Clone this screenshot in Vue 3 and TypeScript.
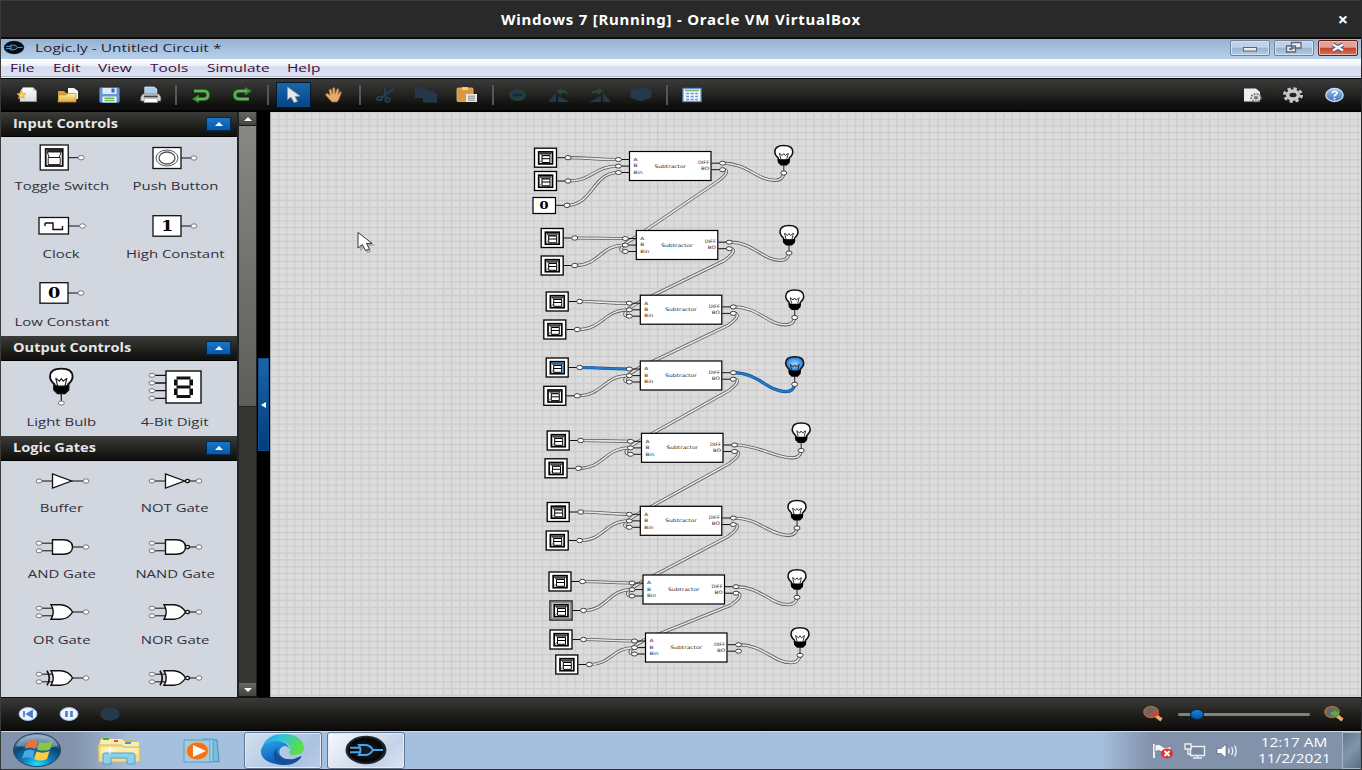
<script setup lang="ts">
interface Item { label: string; icon: string }
interface Group { title: string; kind: string; items: Item[] }
interface Row {
  x: number
  y: number
  a: [number, number]
  b: [number, number]
  bulb: [number, number]
  on?: boolean
  selected?: boolean
}

const menus = [
  { t: 'File', w: 43 }, { t: 'Edit', w: 45 }, { t: 'View', w: 52 },
  { t: 'Tools', w: 57 }, { t: 'Simulate', w: 79.5 }, { t: 'Help', w: 50 },
]

const tools = [
  'new', 'open', 'save', 'print', '|', 'undo', 'redo', '|', 'select', 'hand', '|',
  'cut', 'copy', 'paste', '|', 'wire', 'rotl', 'rotr', 'chip', '|', 'table',
]
const rightTools = ['docgear', 'gear', 'help']

const groups: Group[] = [
  {
    title: 'Input Controls', kind: 'input', items: [
      { label: 'Toggle Switch', icon: 'toggle' }, { label: 'Push Button', icon: 'push' },
      { label: 'Clock', icon: 'clock' }, { label: 'High Constant', icon: 'high' },
      { label: 'Low Constant', icon: 'low' },
    ],
  },
  {
    title: 'Output Controls', kind: 'output', items: [
      { label: 'Light Bulb', icon: 'bulb' }, { label: '4-Bit Digit', icon: 'digit' },
    ],
  },
  {
    title: 'Logic Gates', kind: 'gates', items: [
      { label: 'Buffer', icon: 'buffer' }, { label: 'NOT Gate', icon: 'not' },
      { label: 'AND Gate', icon: 'and' }, { label: 'NAND Gate', icon: 'nand' },
      { label: 'OR Gate', icon: 'or' }, { label: 'NOR Gate', icon: 'nor' },
      { label: '', icon: 'xor' }, { label: '', icon: 'xnor' },
    ],
  },
]

const rows: Row[] = [
  { x: 629.5, y: 151.5, a: [534, 147.7], b: [534, 171], bulb: [783.8, 145] },
  { x: 636.3, y: 230.5, a: [540.7, 228], b: [540.7, 255.5], bulb: [789, 225] },
  { x: 640.3, y: 295.2, a: [545.7, 291.5], b: [543.3, 319.5], bulb: [794.7, 289.5] },
  { x: 640.3, y: 361, a: [545.7, 357.5], b: [543.3, 385.8], bulb: [794.7, 356.3], on: true },
  { x: 641.5, y: 433.3, a: [546.7, 430.5], b: [544.5, 458.3], bulb: [801.2, 422.5] },
  { x: 640.3, y: 506.3, a: [546.7, 502], b: [545.7, 530.5], bulb: [797, 500] },
  { x: 643, y: 575, a: [548.5, 571.5], b: [549.5, 600.5], bulb: [797, 569.3], selected: true },
  { x: 645.5, y: 633, a: [549.5, 629.5], b: [555.3, 654.5], bulb: [800, 627.3] },
]

function link(x1: number, y1: number, x2: number, y2: number): string {
  const k = (x2 - x1) * 0.5
  return `M${x1} ${y1}C${x1 + k} ${y1} ${x2 - k} ${y2} ${x2} ${y2}`
}

const wires: { d: string; on: boolean }[] = []
rows.forEach((r, i) => {
  const ix = r.x - 11.3
  wires.push({ d: link(r.a[0] + 34, r.a[1] + 10, ix, r.y + 8), on: !!r.on })
  wires.push({ d: link(r.b[0] + 34, r.b[1] + 10, ix, r.y + 14.6), on: false })
  const sx = r.x + 93
  const sy = r.y + 11.7
  const nx = r.bulb[0]
  const ny = r.bulb[1] + 28
  wires.push({
    d: `M${sx} ${sy}C${sx + 25} ${sy} ${nx - 27} ${ny + 7.3} ${nx - 9} ${ny + 7.3}C${nx - 3} ${ny + 7.3} ${nx - 0.5} ${ny + 4.5} ${nx} ${ny}`,
    on: !!r.on,
  })
  const next = rows[i + 1]
  if (next) {
    const by = r.y + 18
    const ex = next.x - 11.3
    const ey = next.y + 21
    wires.push({
      d: `M${sx} ${by}C${sx + 6} ${by} ${sx + 6} ${by + 4} ${sx - 5} ${by + 12}L${ex + 10} ${ey - 14}C${ex - 6} ${ey - 5} ${ex - 7} ${ey} ${ex} ${ey}`,
      on: false,
    })
  }
})
wires.push({ d: link(567, 205.3, 618.2, 172.5), on: false })
</script>

<template>
  <div class="screen">
    <svg class="defs" width="0" height="0">
      <defs>
        <linearGradient id="gold" x2="0" y2="1"><stop stop-color="#fff0a8" /><stop offset="1" stop-color="#dfa637" /></linearGradient>
        <linearGradient id="glass" x2="0" y2="1"><stop stop-color="#fff" /><stop offset="1" stop-color="#dcdcdc" /></linearGradient>
        <linearGradient id="blue" x2="0" y2="1"><stop stop-color="#9fc6ef" /><stop offset="1" stop-color="#3b72ba" /></linearGradient>
        <radialGradient id="orb" cx=".5" cy=".95" r=".9"><stop stop-color="#22e2ff" /><stop offset=".35" stop-color="#0a80bb" /><stop offset=".7" stop-color="#0d4272" /><stop offset="1" stop-color="#6f94b0" /></radialGradient>
        <linearGradient id="edge1" x2="1" y2=".3"><stop stop-color="#2a9de6" /><stop offset=".5" stop-color="#2fc6d8" /><stop offset="1" stop-color="#5cdd49" /></linearGradient>
        <linearGradient id="edge2" x2=".4" y2="1"><stop stop-color="#28a5eb" /><stop offset="1" stop-color="#0c55b2" /></linearGradient>
        <radialGradient id="logo"><stop stop-color="#1c1f22" /><stop offset=".8" stop-color="#050607" /><stop offset="1" stop-color="#32373b" /></radialGradient>
        <radialGradient id="lit"><stop stop-color="#a9d3fb" /><stop offset=".7" stop-color="#4197ec" /><stop offset="1" stop-color="#187bdc" /></radialGradient>
      </defs>

      <symbol id="t-new" viewBox="-16 -12 32 24"><path d="M-4-7.500H6L9.500-4V6.500H-7V-3Z" fill="url(#glass)" stroke="#aaa" stroke-width=".5" /><path d="M6-7.500V-4H9.500" fill="#ccc" /><path d="M-5.500-4L-4.300-1.300H-1L-3.500.800-2.700 3.500-5.500 2-8.500 3.500-7.600.800-10-1.300H-6.700Z" fill="#ffd45a" stroke="#dfa22c" stroke-width=".8" /></symbol>
      <symbol id="t-open" viewBox="-16 -12 32 24"><path d="M0-7H6L10-4V4H0Z" fill="#f5f5f5" /><path d="M-10-4H-4L-2-2H6V7H-10Z" fill="#d79b36" /><path d="M-9 0H-2L0-1.500H8L8 7H-10Z" fill="url(#gold)" stroke="#c98b25" stroke-width=".7" /></symbol>
      <symbol id="t-save" viewBox="-16 -12 32 24"><rect x="-9.500" y="-7.500" width="20" height="15" rx="1.500" fill="#6a94d6" stroke="#3e6bb4" stroke-width=".7" /><path d="M-6.500-7H7.500V-1H-6.500Z" fill="#dde9f8" /><path d="M2.500-6.500H5.500V-2.500H2.500Z" fill="#3f69aa" /><path d="M-6.500 1.500H7.500V7.500H-6.500Z" fill="#f4fbef" /><path d="M-4.500 3.200H5.500M-4.500 5.500H5.500" stroke="#62b851" stroke-width="1.400" /></symbol>
      <symbol id="t-print" viewBox="-16 -12 32 24"><g transform="translate(.8 0)"><path d="M-6-8H3L6-6V0H-6Z" fill="#a9cdee" stroke="#dcecfa" stroke-width=".8" /><path d="M-8-1H8L10 2V6H-10V2Z" fill="#d4d6d8" stroke="#777" stroke-width=".7" /><path d="M-7 1.500H7" stroke="#444" stroke-width="1.800" /><path d="M-6 3.500H6L7 7.500H-7Z" fill="#fff" stroke="#999" stroke-width=".5" /></g></symbol>
      <symbol id="t-undo" viewBox="-16 -12 32 24"><path d="M-7-4H3Q7-4 7 0T2 4H-4" fill="none" stroke="#2b7127" stroke-width="4" /><path d="M-2-.500V8L-9 4Z" fill="#3d8c37" /><path d="M-7-4H3Q7-4 7 0T2 4H-5" fill="none" stroke="#67b45c" stroke-width="2" /></symbol>
      <symbol id="t-redo" viewBox="-16 -12 32 24"><g transform="translate(.8 0) scale(-1 1)"><path d="M-4-4H3Q8-4 8 0T3 4H-6" fill="none" stroke="#2b7127" stroke-width="4" /><path d="M-2-8V.500L-9-4Z" fill="#3d8c37" /><path d="M-4-4H3Q8-4 8 0T3 4H-6" fill="none" stroke="#67b45c" stroke-width="2" /></g></symbol>
      <symbol id="t-select" viewBox="-16 -12 32 24"><path d="M-5.500-8V4.500L-2 2 1 7.500 4.500 6.500 2 1.500 7 1Z" fill="#e8e8e8" stroke="#909aa6" stroke-width=".8" /></symbol>
      <symbol id="t-hand" viewBox="-16 -12 32 24"><path d="M-3 6L-8.500 0Q-8.500-2-6-1.500L-4 .500-5-5Q-4-7-2.500-5L-1.500-1-1.500-6.500Q0-8.500 1-6.500V-1.500L3-6Q5-7 5-5L4-.500 6-3.500Q8-4 7-1L4.500 5 3 7H-2Z" fill="#e4aa70" stroke="#9b6030" stroke-width=".7" /></symbol>
      <symbol id="t-cut" viewBox="-16 -12 32 24"><path d="M0-8V1M8-6L-4 3M0 1L3 4" stroke="#28435b" stroke-width="1.600" /><ellipse cx="-5.500" cy="3.500" rx="2.600" ry="1.800" fill="none" stroke="#28435b" stroke-width="1.500" /><ellipse cx="2.500" cy="5" rx="2.400" ry="2" fill="none" stroke="#28435b" stroke-width="1.500" /></symbol>
      <symbol id="t-copy" viewBox="-16 -12 32 24"><path d="M-11-8H-2L1-5V3H-11ZM-3-4H6L11-1V7.500H-3Z" fill="#24384a" /></symbol>
      <symbol id="t-paste" viewBox="-16 -12 32 24"><rect x="-10" y="-7" width="16" height="13.500" rx="1" fill="#d99843" stroke="#f1bb69" stroke-width=".8" /><path d="M-5-8H1V-5H-5Z" fill="#f3cf76" /><path d="M-1-1H10V7H-1Z" fill="#e7e7e7" /><path d="M1 1.200H8M1 3.200H8M1 5.200H8" stroke="#888" /></symbol>
      <symbol id="t-wire" viewBox="-16 -12 32 24"><ellipse cx="-.500" rx="7.500" ry="4.800" fill="#20364a" stroke="#224536" stroke-width="2" /><path d="M-5 0H4" stroke="#102539" stroke-width="1.500" /></symbol>
      <symbol id="t-rotl" viewBox="-16 -12 32 24"><path d="M-3-3V7H-11ZM-1 1L11 7H-1Z" fill="#23394b" /><path d="M-3-4L2-7V-5Q8-6 9 0 6-3 2-2V0Z" fill="#284832" /></symbol>
      <symbol id="t-rotr" viewBox="-16 -12 32 24"><g transform="scale(-1 1)"><path d="M-3-3V7H-11ZM-1 1L11 7H-1Z" fill="#23394b" /><path d="M-3-4L2-7V-5Q8-6 9 0 6-3 2-2V0Z" fill="#284832" /></g></symbol>
      <symbol id="t-chip" viewBox="-16 -12 32 24"><path d="M-10.500-5L-6-6.500-3-6.500 0-8 3-6.500 6-6.500 10.500-5V2.500L5 4.500 0 6.500-5 4.500-10.500 2.500Z" fill="#24394b" /></symbol>
      <symbol id="t-table" viewBox="-16 -12 32 24"><rect x="-9" y="-6.500" width="18" height="13" fill="#f4f9ff" stroke="#6190cd" stroke-width="1.300" /><path d="M-7-4.500H7" stroke="#79b665" stroke-width="1.600" /><path d="M-6-1.500H6M-6 1.500H6M-6 4.500H6" stroke="#6c98d0" stroke-width="1.600" stroke-dasharray="3.200 1.400" /></symbol>
      <symbol id="t-gear" viewBox="-16 -12 32 24"><ellipse rx="8.500" ry="6.300" fill="none" stroke="#c9c9c9" stroke-width="3" stroke-dasharray="3.200 2.650" /><ellipse rx="5.300" ry="4" fill="none" stroke="#c9c9c9" stroke-width="3.500" /></symbol>
      <symbol id="t-docgear" viewBox="-16 -12 32 24"><path d="M-8-6.500H4L8-3V6.500H-8Z" fill="#eee" /><ellipse cx="4" cy="2.700" rx="5" ry="3.800" fill="#ddd" stroke="#777" stroke-width="1.800" stroke-dasharray="1.800 1.200" /><ellipse cx="4" cy="2.700" rx="2.200" ry="1.700" fill="#777" /></symbol>
      <symbol id="t-help" viewBox="-16 -12 32 24"><ellipse cx=".500" rx="8.700" ry="6.500" fill="url(#blue)" stroke="#c9ddf5" stroke-width="1.300" /><path d="M-2-2Q0-5 3-2.700 3.500-1 .500.500V1.500" fill="none" stroke="#fff" stroke-width="1.600" /><circle cx=".500" cy="3.700" r="1" fill="#fff" /></symbol>

      <symbol id="sw" viewBox="0 0 23 20" overflow="visible">
        <rect x=".5" y=".5" width="22" height="19" fill="#fff" stroke="#000" stroke-width="1.300" />
        <rect x="4.700" y="4.200" width="13.800" height="12" fill="#fff" stroke="#000" stroke-width="1.700" />
        <path d="M6 5.700H17L15.500 7.800H8Z" fill="#888" stroke="#000" stroke-width=".8" />
        <path d="M8 8H16V14.800H8ZM8 11H16" fill="#fff" stroke="#000" />
        <path d="M5.500 14.800L8 12" stroke="#555" stroke-width=".8" />
      </symbol>
      <symbol id="lamp" viewBox="-10 0 20 28" overflow="visible">
        <path d="M0 20V28" stroke="#222" />
        <path class="bulb-glass" d="M-9 7Q-9 .500 0 .500T9 7Q9 10 5.500 13V15H-5.500V13Q-9 10-9 7Z" stroke="#111" stroke-width="1.500" />
        <path d="M-4.500 8L-3 14M4.500 8L3 14M-4 8.500L-1.500 10.500 0 8.500 1.500 10.500 4 8.500" fill="none" stroke="#222" stroke-width=".9" />
        <path d="M-6 13.500Q0 16 6 13.500V17.500L3 20.500H-3L-6 17.500Z" fill="#000" />
      </symbol>
      <symbol id="gatelogo" viewBox="-22 -16 44 32">
        <ellipse rx="20.500" ry="14.300" fill="url(#logo)" />
        <path d="M-7-5H-1Q4-5 7 0 4 5-1 5H-7Q-4 0-7-5ZM7 0H17M-16-2.300H-6M-16 2.300H-6" fill="none" stroke="#48a3ef" stroke-width="2" />
      </symbol>
    </svg>

    <header class="host">
      <span class="host-title">Windows 7 [Running] - Oracle VM VirtualBox</span>
      <span class="host-close">×</span>
    </header>

    <div class="titlebar">
      <svg class="app-logo" viewBox="-22 -16 44 32" preserveAspectRatio="none"><use href="#gatelogo" x="-22" y="-16" width="44" height="32" /></svg>
      <span class="app-title wide">Logic.ly - Untitled Circuit *</span>
      <div class="win-buttons">
        <span class="win"><svg width="40" height="15"><rect x="13.500" y="7.500" width="13" height="3.500" fill="#eee" stroke="#59657a" /></svg></span>
        <span class="win"><svg width="40" height="15"><path d="M17.500 2.500H27V8H17.500ZM12.500 6H21.500V12H12.500Z" fill="#eee" stroke="#59657a" stroke-width="1.300" /><rect x="15.500" y="8.300" width="3" height="1.500" fill="#6d86a5" stroke="#59657a" stroke-width=".6" /></svg></span>
        <span class="win close"><svg width="40" height="15"><path d="M15 4.500L25 10.500M25 4.500L15 10.500" stroke="#515968" stroke-width="4.600" /><path d="M15 4.500L25 10.500M25 4.500L15 10.500" stroke="#f4f4f4" stroke-width="2.600" /></svg></span>
      </div>
    </div>

    <nav class="menu">
      <span v-for="m in menus" :key="m.t" class="menu-item" :style="{ width: m.w + 'px' }"><b class="wide">{{ m.t }}</b></span>
    </nav>

    <div class="toolbar">
      <template v-for="(t, i) in tools" :key="i">
        <i v-if="t === '|'" class="sep" />
        <span v-else class="tool" :class="{ active: t === 'select' }"><svg width="32" height="24"><use :href="'#t-' + t" width="32" height="24" /></svg></span>
      </template>
      <span class="spacer" />
      <span v-for="t in rightTools" :key="t" class="tool"><svg width="32" height="24"><use :href="'#t-' + t" width="32" height="24" /></svg></span>
    </div>

    <main class="work">
      <aside class="side">
        <section v-for="g in groups" :key="g.title" :class="g.kind">
          <h2 class="group-head"><span class="wide">{{ g.title }}</span><i class="collapse"><svg width="8" height="4"><path d="M0 4L4 0 8 4Z" fill="#fff" /></svg></i></h2>
          <div class="items">
            <div v-for="it in g.items" :key="it.icon" class="item">
              <svg class="part" viewBox="-32 -21 64 42" width="64" height="42" fill="#fff" stroke="#111">
                <g v-if="it.icon === 'toggle'" transform="translate(-.8 0)">
                  <path d="M7-.3H17" /><rect x="-21" y="-13" width="28" height="25" stroke-width="1.300" />
                  <rect x="-15.500" y="-9" width="17" height="17" stroke-width="1.800" />
                  <path d="M-14-6H0L-2-.5H-12ZM-13-.5H-1V6.500H-13Z" stroke-width=".9" /><path d="M-14-7H1" stroke-width="1.800" />
                  <ellipse class="pin" cx="20" cy="-.3" rx="3" ry="2.200" />
                </g>
                <g v-else-if="it.icon === 'push'">
                  <path d="M6 0H17" /><rect x="-22" y="-10.500" width="28" height="21" stroke-width="1.300" />
                  <ellipse cx="-8" rx="11" ry="8" stroke="#555" /><ellipse cx="-8" rx="8" ry="6" stroke="#555" stroke-width="1.300" />
                  <ellipse class="pin" cx="19" rx="3" ry="2.200" />
                </g>
                <g v-else-if="it.icon === 'clock'">
                  <path d="M7 0H18" /><rect x="-23" y="-8.500" width="29.500" height="16.500" stroke-width="1.300" />
                  <path d="M-17-3H-9V3.500H.5V0M-17-3V0" fill="none" stroke-width="1.400" />
                  <ellipse class="pin" cx="20.500" cy="0" rx="3" ry="2.200" />
                </g>
                <g v-else-if="it.icon === 'high' || it.icon === 'low'">
                  <path d="M6 0H16" /><rect x="-22" y="-10.300" width="28" height="20.500" stroke-width="1.300" />
                  <text class="digit" x="0" y="5" transform="translate(-7.800 0) scale(1.180 1)">{{ it.icon === 'high' ? '1' : '0' }}</text>
                  <ellipse class="pin" cx="19" rx="3" ry="2.200" />
                </g>
                <g v-else-if="it.icon === 'bulb'" transform="translate(-.7 0)">
                  <use href="#lamp" x="-13" y="-19" width="26" height="35" />
                  <ellipse class="pin" cx="0" cy="16" rx="3" ry="2" />
                </g>
                <g v-else-if="it.icon === 'digit'">
                  <path d="M-20-11.700H-9M-20-4H-9M-20 3.700H-9M-20 11.300H-9" stroke-width="1.300" />
                  <rect x="-9" y="-16" width="35" height="32" stroke-width="1.400" />
                  <path d="M1.500-9H15.500M1.500 0H15.500M1.500 9.500H15.500" stroke-width="3" /><path d="M.800-7.500V-1.500M16.200-7.500V-1.500M.800 1.500V8M16.200 1.500V8" stroke-width="3.600" />
                  <ellipse v-for="y in [-11.7, -4, 3.7, 11.3]" :key="y" class="pin" cx="-23" :cy="y" rx="3" ry="2" />
                </g>
                <g v-else>
                  <path v-if="it.icon === 'buffer' || it.icon === 'not'" d="M-20 0H-10M8 0H21" />
                  <path v-else d="M-20-3.800H-8M-20 3.800H-8M10 0H21" />
                  <path v-if="it.icon === 'buffer' || it.icon === 'not'" d="M-9.500-7V7L9.500 0Z" stroke-width="1.300" />
                  <path v-else-if="it.icon === 'and' || it.icon === 'nand'" d="M-9.500-7.300H1Q10.500-7 10.500 0T1 7.300H-9.500Z" stroke-width="1.400" />
                  <path v-else d="M-11-7.300H-1Q7-6.500 10.500 0 7 6.500-1 7.300H-11Q-6.500 0-11-7.300Z" stroke-width="1.400" />
                  <path v-if="it.icon === 'xor' || it.icon === 'xnor'" d="M-15-7.300Q-10.500 0-15 7.300" fill="none" stroke-width="1.700" />
                  <ellipse v-if="['not', 'nand', 'nor', 'xnor'].includes(it.icon)" cx="12.500" rx="2" ry="1.600" stroke-width="1.300" />
                  <template v-if="it.icon === 'buffer' || it.icon === 'not'"><ellipse class="pin" cx="-23" rx="2.900" ry="2" /></template>
                  <template v-else><ellipse class="pin" cx="-23" cy="-3.800" rx="2.900" ry="2" /><ellipse class="pin" cx="-23" cy="3.800" rx="2.900" ry="2" /></template>
                  <ellipse class="pin" cx="24" rx="2.900" ry="2.200" />
                </g>
              </svg>
              <span v-if="it.label" class="label wide">{{ it.label }}</span>
            </div>
          </div>
        </section>
      </aside>

      <div class="scroll">
        <span class="arrow"><svg width="8" height="4"><path d="M0 4L4 0 8 4Z" fill="#fff" /></svg></span>
        <span class="thumb" />
        <span class="track" />
        <span class="arrow"><svg width="8" height="4"><path d="M0 0L4 4 8 0Z" fill="#fff" /></svg></span>
      </div>
      <div class="gutter"><span class="handle"><svg width="5" height="6"><path d="M5 0V6L0 3Z" fill="#fff" /></svg></span></div>

      <svg class="canvas" viewBox="270 112 1091 585" width="1091" height="585">
        <defs>
          <pattern id="grid" x="278" y="118.500" width="8.240" height="6.780" patternUnits="userSpaceOnUse">
            <rect width="8.240" height="6.780" fill="#dcdcdc" /><path d="M.5 0V6.780M0 .500H8.240" stroke="#cbcbcb" stroke-width="1.200" />
          </pattern>
        </defs>
        <rect x="270" y="112" width="1091" height="585" fill="url(#grid)" />
        <path d="M270.500 112V697" stroke="#aaa" />
        <g v-for="(w, i) in wires" :key="i" fill="none">
          <path :d="w.d" :stroke="w.on ? '#0f4f8d' : '#5a5a5a'" stroke-width="3.200" />
          <path :d="w.d" :stroke="w.on ? '#1f7bd0' : '#e4e4e4'" :stroke-width="w.on ? 2 : 1.6" />
        </g>
        <g v-for="(r, i) in rows" :key="'r' + i">
          <g v-for="(p, k) in [r.a, r.b]" :key="k">
            <path :d="`M${p[0] + 23} ${p[1] + 10}h8`" stroke="#111" />
            <use href="#sw" :x="p[0]" :y="p[1]" width="23" height="20" />
            <rect v-if="r.selected && k === 1" :x="p[0] + 2" :y="p[1] + 2" width="19" height="16" fill="none" stroke="#8c8c8c" stroke-width="1.800" />
            <path v-if="r.on && k === 0" :d="`M${p[0] + 6} ${p[1] + 5.5}h11.500v10`" fill="none" stroke="#1c6fc0" stroke-width="1.600" />
            <ellipse class="node" :cx="p[0] + 34" :cy="p[1] + 10" rx="3" ry="2.200" />
          </g>
          <path :d="`M${r.x - 9} ${r.y + 8}h9m-9 6.600h9m-9 6.400h9M${r.x + 82} ${r.y + 11.7}h9m-9 6.500h9`" stroke="#111" />
          <rect :x="r.x" :y="r.y" width="81.500" height="29" fill="#fff" stroke="#000" stroke-width="1.200" />
          <text class="tiny" :x="r.x + 4" :y="r.y + 9.300" textLength="4" lengthAdjust="spacingAndGlyphs">A</text>
          <text class="tiny" :x="r.x + 4" :y="r.y + 15.800" textLength="4" lengthAdjust="spacingAndGlyphs">B</text>
          <text class="tiny" :x="r.x + 4" :y="r.y + 22.200" textLength="9" lengthAdjust="spacingAndGlyphs">Bin</text>
          <text class="tiny" :x="r.x + 25" :y="r.y + 16" textLength="31.500" lengthAdjust="spacingAndGlyphs">Subtractor</text>
          <text class="tiny" :x="r.x + 68.500" :y="r.y + 12.800" textLength="11" lengthAdjust="spacingAndGlyphs">DIFF</text>
          <text class="tiny" :x="r.x + 71.500" :y="r.y + 18.700" textLength="8" lengthAdjust="spacingAndGlyphs">BO</text>
          <ellipse v-for="d in [8, 14.6, 21]" :key="d" class="node" :cx="r.x - 11" :cy="r.y + d" rx="3" ry="2" />
          <ellipse v-for="d in [11.7, 18.2]" :key="d" class="node" :cx="r.x + 93" :cy="r.y + d" rx="3" ry="2" />
          <use href="#lamp" :class="{ lit: r.on }" :x="r.bulb[0] - 10" :y="r.bulb[1]" width="20" height="28" />
          <ellipse class="node" :cx="r.bulb[0]" :cy="r.bulb[1] + 28" rx="3" ry="2.100" />
        </g>
        <path d="M556 205.300H565" stroke="#111" />
        <rect x="533" y="197.500" width="22.500" height="16" fill="#fff" stroke="#000" stroke-width="1.200" />
        <text class="zero" x="539.500" y="209.300" textLength="9" lengthAdjust="spacingAndGlyphs">0</text>
        <ellipse class="node" cx="567" cy="205.300" rx="3" ry="2.200" />
        <path d="M360 235V251.500L364 248 367.500 253.500 371.500 251.500 368.500 246.500 375.500 245.500Z" fill="#777" opacity=".45" />
        <path d="M358 232.500V248L362.300 244.500 365.500 250.500 369.500 249 366.500 243.500 372 243.300Z" fill="#fff" stroke="#222" stroke-width=".9" />
      </svg>
    </main>

    <div class="controls">
      <span class="sim"><svg width="20" height="16"><ellipse cx="10" cy="8" rx="9" ry="6.500" fill="#eef4fd" stroke="#9ab9e4" /><path d="M6 5V11M14 5V11L9 8Z" fill="#4b7fc9" stroke="#4b7fc9" stroke-width="1.800" /></svg></span>
      <span class="sim"><svg width="20" height="16"><ellipse cx="10" cy="8" rx="9" ry="6.500" fill="#eef4fd" stroke="#9ab9e4" /><path d="M7.500 5V11M12.500 5V11" stroke="#4b7fc9" stroke-width="2.600" /></svg></span>
      <span class="sim"><svg width="20" height="16"><ellipse cx="10" cy="8" rx="9.800" ry="6.800" fill="#25394a" /></svg></span>
      <span class="spacer" />
      <svg width="22" height="18"><path d="M13 10L19.500 15" stroke="#eda967" stroke-width="3.500" /><ellipse cx="9" cy="7" rx="7" ry="5.500" fill="#66696c" stroke="#a56a38" stroke-width="1.700" /><path d="M7.500 9H17" stroke="#ed3434" stroke-width="3" /></svg>
      <span class="slider"><i class="knob" /></span>
      <svg width="22" height="18"><path d="M13 10L19.500 15" stroke="#eda967" stroke-width="3.500" /><ellipse cx="9" cy="7" rx="7" ry="5.500" fill="#66696c" stroke="#a56a38" stroke-width="1.700" /><path d="M8 8.500H16M12 5.500V11.500" stroke="#4fae46" stroke-width="3" /></svg>
    </div>

    <footer class="taskbar">
      <svg class="start" width="50" height="36" viewBox="0 0 50 36">
        <ellipse cx="25" cy="18" rx="23.500" ry="16.500" fill="url(#orb)" stroke="#24455f" />
        <path d="M4 14Q9 3 25 3T46 14Q36 17 25 16T4 14Z" fill="#fff" opacity=".33" />
        <path d="M15.500 9.500Q20 6 25.500 9.500L23 17Q18 14 13 17Z" fill="#ef7136" /><path d="M27.500 10Q33 12.500 41 9L38 17.500Q31 20 25 17.500Z" fill="#8bc642" />
        <path d="M12.500 19Q18 16 22.500 19L20.500 26.500Q15 24 10 26.500Z" fill="#48a8e5" /><path d="M24.500 19.500Q31 22 37.500 19L35 27Q29 30 22 27Z" fill="#ffcc3d" />
      </svg>
      <svg class="task explorer" width="46" height="32" viewBox="0 0 46 32">
        <path d="M2 7L5 2H13L15 5H35L42 8V26H2Z" fill="#d6b456" /><path d="M4 4H24L29 7H42V12H2Z" fill="#f8ecb3" /><path d="M6 3H12V5H6Z" fill="#21b53c" /><path d="M17 5H21V7H17Z" fill="#e24b3d" /><path d="M28 7H34V9H28Z" fill="#3a9fe2" />
        <path d="M1 10H24L27 12H43V27H2Z" fill="#f1dc8b" stroke="#d0b254" stroke-width=".8" /><path d="M4 12H24L26 13H41V19H4Z" fill="#fbefb0" />
        <path d="M6 29V19Q6 18 8 18H35Q38 18 38 20V29H30V23H14V29Z" fill="#8ed1ec" stroke="#4aa4cc" stroke-width="1" /><path d="M13 11V19M9 15H17" stroke="#fff" stroke-width="1.200" />
      </svg>
      <svg class="task media" width="42" height="28" viewBox="0 0 42 28">
        <path d="M24 3H34L36 25 24 24Z" fill="#7fbcd8" stroke="#3f91bd" /><path d="M20 2H30V25H20Z" fill="#a4d4e9" stroke="#4d9dc3" /><path d="M1 3H27V25H1Z" fill="#9fcde4" stroke="#55a2c6" />
        <ellipse cx="14.500" cy="14" rx="11" ry="9" fill="#f0721c" stroke="#f9b174" /><path d="M10 8V20L23 14Z" fill="#fff" />
      </svg>
      <span class="win-task edge">
        <svg width="46" height="34" viewBox="0 0 46 34">
          <path d="M2 16C4 5 13 1 24 1 36 1 44 7 44 15 44 20 39 22 34 22 30 22 28 20 30 18 31 11 24 8 17 8 10 8 4 12 2 16Z" fill="url(#edge1)" />
          <path d="M1 17C3 10 10 8 17 8 24 8 29 12 29 16Q27 11 22 14C16 18 20 28 33 27 28 33 20 32 16 31 6 29 0 24 1 17Z" fill="url(#edge2)" />
          <path d="M18 14C13 20 20 28 34 26L41 23C43 24 35 33 23 32 14 31 10 20 18 14Z" fill="#124f9b" />
        </svg>
      </span>
      <span class="win-task current"><svg width="44" height="32"><use href="#gatelogo" width="44" height="32" /></svg></span>
      <span class="spacer" />
      <div class="tray">
        <svg width="24" height="20"><path d="M3 3V17" stroke="#eee" stroke-width="2" /><path d="M4 4Q8 2 11 5T20 5V12Q15 14 11 11T4 11Z" fill="#f4f4f4" stroke="#5b6b80" stroke-width=".7" /><ellipse cx="16" cy="12.500" rx="6" ry="5" fill="#df3030" /><path d="M13.500 10L18.500 15M18.500 10L13.500 15" stroke="#fff" stroke-width="1.800" /></svg>
        <svg width="24" height="20"><rect x="7.500" y="5.500" width="14" height="9" fill="#7488a2" stroke="#eee" stroke-width="1.500" /><path d="M10 17H19M14.500 14V17M2 3H8V8H2ZM5 8V13H7" fill="#7a899b" stroke="#eee" stroke-width="1.400" /></svg>
        <svg width="24" height="20"><path d="M2 7.500H6L11 3V17L6 12.500H2Z" fill="#fff" stroke="#52647c" stroke-width=".7" /><path d="M13.500 7.500Q15 10 13.500 12.500M16.500 6Q19 10 16.500 14M19.500 4.500Q23 10 19.500 15.500" fill="none" stroke="#eef2f8" stroke-width="1.300" /></svg>
      </div>
      <div class="clock"><span class="wide">12:17 AM</span><span class="wide">11/2/2021</span></div>
      <span class="peek" />
    </footer>
  </div>
</template>

<style>
body { margin: 0; overflow: hidden; }
</style>

<style scoped>
* { box-sizing: border-box; }
.screen {
  width: 1362px; height: 770px; display: flex; flex-direction: column; overflow: hidden;
  background: #111; border-left: 1px solid #3a3a3a; border-right: 1px solid #2c2c2c; border-bottom: 1px solid #333;
  font-family: "Open Sans", "Noto Sans", sans-serif;
}
.defs { position: absolute; }
svg { display: block; flex: none; }
.wide { display: inline-block; transform: scaleX(1.22); transform-origin: 0 50%; white-space: nowrap; }
.spacer { flex: 1; }

.host { height: 39px; flex: none; position: relative; display: flex; align-items: center; justify-content: center; background: #292929; border-top: 1px solid #3b3b3b; border-bottom: 2px solid #0c0c0c; color: #fff; }
.host-title { font: 700 15px/20px "Noto Sans", sans-serif; letter-spacing: .76px; padding-top: 0; }
.host-close { position: absolute; right: 13px; top: 8px; font: 700 18px/20px "Noto Sans", sans-serif; }

.titlebar { height: 20px; flex: none; display: flex; background: linear-gradient(#96b2d2, #b8d0ea); }
.app-logo { width: 22px; height: 15px; margin: 1px 0 0 2px; }
.app-title { margin-left: 10px; font-size: 11.500px; line-height: 18px; color: #1b2333; transform: scaleX(1.345); }
.win-buttons { margin-left: auto; display: flex; gap: 4px; padding: 1px 3px 0 0; }
.win { width: 40px; height: 16px; border: 1px solid #70829c; border-radius: 2px; background: linear-gradient(#bfd2e9 45%, #99b3d1 50%, #b4cce6); box-shadow: inset 0 0 0 1px #d5e2f1; }
.win svg { margin: -1px; }
.close { border-color: #611f25; background: linear-gradient(#e3a296 45%, #c04329 50%, #d6745c); box-shadow: inset 0 0 0 1px #eebbb1; }

.menu { height: 19px; flex: none; display: flex; padding-left: 9px; background: linear-gradient(#fff, #eff1fa 35%, #d4dbee 45%, #e0e5f4); border-bottom: 1px solid #f4f4f4; box-shadow: inset 0 -1px #aab2c6; }
.menu-item { display: flex; align-items: flex-start; }
.menu-item b { font-weight: 400; font-size: 11.500px; line-height: 18px; color: #3a0c3c; transform: scaleX(1.34); }

.toolbar { height: 34px; flex: none; display: flex; align-items: center; padding: 0 6.500px 0 5.500px; background: linear-gradient(#3b3b39, #232321 50%, #0e0e0c 88%); border-top: 1px solid #000; border-bottom: 2px solid #000; }
.tool { width: 41px; height: 24px; display: flex; align-items: center; justify-content: center; }
.active { width: 33px; margin: 0 4px; background: linear-gradient(#1b66ab, #034585); box-shadow: 0 0 0 1px #06182a; }
.sep { width: 10px; height: 20px; display: flex; justify-content: center; }
.sep::before { content: ""; width: 2px; height: 20px; background: #555; }

.work { height: 585px; flex: none; display: flex; overflow: hidden; }
.side { width: 236px; overflow: hidden; background: #d2d6de; }
.group-head { margin: 0; height: 25px; display: flex; align-items: center; justify-content: space-between; padding: 0 6px 2px 12px; font-size: 11.500px; font-weight: 700; color: #e6e6e6; background: linear-gradient(#3b3b39, #12120f 90%); border-bottom: 1px solid #000; }
.group-head .wide { transform: scaleX(1.270); }
.collapse { width: 25px; height: 14px; margin-top: 2px; display: flex; align-items: center; justify-content: center; background: linear-gradient(#1a76c8, #0959a6); border: 1px solid #00294f; }
.items { display: grid; grid-template-columns: 120px 116px; grid-auto-rows: 67.600px; }
.input .items { height: 199px; }
.output .items { height: 75px; grid-auto-rows: 75px; padding-top: 5px; }
.gates .items { grid-auto-rows: 65.700px; }
.item { display: flex; flex-direction: column; align-items: center; padding-left: 1px; }
.item:nth-child(even) { padding: 0 8px 0 0; }
.label { height: 14px; margin-top: .4px; line-height: 14px; font-size: 11.300px; color: #30303c; transform-origin: 50% 50%; transform: scaleX(1.320); }
.output .label { margin-top: 6.500px; }
.gates .part { margin-top: -1px; }
.gates .label { margin-top: -.6px; }
.pin { fill: #fff; stroke: #777; stroke-width: 1; }
.digit { font: 700 15px "DejaVu Serif", serif; fill: #000; stroke: none; text-anchor: middle; }

.scroll { width: 20px; display: flex; flex-direction: column; border: 1px solid #222; border-width: 0 1px 0 2px; background: #353531; }
.arrow { height: 14px; display: flex; align-items: center; justify-content: center; background: linear-gradient(#686865, #42423f); border-bottom: 1px solid #161616; }
.thumb { height: 281px; background: linear-gradient(#888883, #5d5d59); border-bottom: 1px solid #222; }
.track { flex: 1; }
.gutter { width: 13px; background: #000; display: flex; flex-direction: column; padding: 246px 0 0 1px; }
.handle { height: 93px; width: 11px; display: flex; align-items: center; justify-content: center; background: linear-gradient(#1d64a7, #003d7d); border: 1px solid #0b4d8e; }
.canvas { background: #ddd; }
.node { fill: #fff; stroke: #3c3c3c; stroke-width: 1; }
.tiny { font: 4.600px "DejaVu Sans", sans-serif; fill: #222; }
.zero { font: 700 10.500px "DejaVu Serif", serif; }
.lit { --bulb: url(#lit); }
.bulb-glass { fill: var(--bulb, #fff); }

.controls { height: 34px; flex: none; display: flex; align-items: center; padding: 0 16px 0 6px; background: linear-gradient(#3a3a38, #20201e 50%, #0b0b09); border-top: 1px solid #111; border-bottom: 1px solid #000; }
.sim { width: 41px; display: flex; justify-content: center; }
.slider { width: 132px; height: 3px; margin: 1px 13px 0 14px; border-radius: 2px; background: #82827e; position: relative; }
.knob { position: absolute; left: 12px; top: -4px; width: 14px; height: 11px; border-radius: 50%; background: linear-gradient(#1b82da, #0754a1); border: 1px solid #03274d; }

.taskbar { height: 38px; flex: none; display: flex; align-items: center; background: linear-gradient(90deg, #8292aa 70px, #a5bfde 130px, #a5bfde 1100px, #8292aa 1150px); border-top: 1px solid #cad8e8; }
.start { margin: -1px 0 0 11px; }
.explorer { margin-left: 35px; }
.media { margin-left: 40px; }
.win-task { width: 78px; height: 37px; display: flex; align-items: center; justify-content: center; border: 1px solid #5e7594; border-radius: 3px; background: linear-gradient(135deg, #d4e0f0, #abc1e0 70%, #bdcee5); box-shadow: inset 0 0 0 1px #e3ecf7; }
.win-task svg { margin-top: -2px; }
.edge { margin-left: 19px; }
.current { margin-left: 5px; background: linear-gradient(135deg, #f7f9fd, #c4d2e9 70%, #dce5f2); }
.tray { display: flex; gap: 8px; margin-right: 11px; }
.clock { width: 88px; margin-right: 4px; display: flex; flex-direction: column; align-items: center; color: #fff; font-size: 12px; line-height: 16px; }
.clock .wide { transform-origin: 50% 50%; transform: scaleX(1.280); }
.peek { width: 19px; height: 37px; border: 1px solid #a4b6c8; border-right-color: #60758c; background: linear-gradient(135deg, #64798f, #8294aa 50%, #586d84); }
</style>
